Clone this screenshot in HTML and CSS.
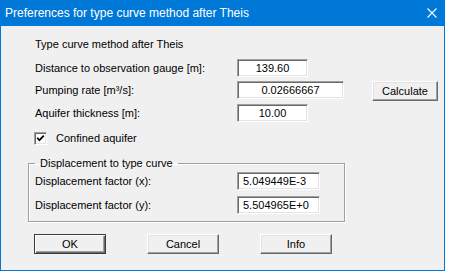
FILE: index.html
```html
<!DOCTYPE html>
<html lang="en">
<head>
    <meta charset="UTF-8">
    <title>Preferences for type curve method after Theis</title>
    <link rel="stylesheet" href="styles.css">
</head>
<body>
    <div class="window">
        <div class="titlebar">
            <span class="title">Preferences for type curve method after Theis</span>
            <svg class="close-icon" width="10" height="10" viewBox="0 0 10 10">
                <path d="M0.5 0.5 L9.5 9.5 M9.5 0.5 L0.5 9.5" stroke="#fff" stroke-width="1.1" fill="none"/>
            </svg>
        </div>

        <div class="content">
            <p class="heading">Type curve method after Theis</p>

            <div class="form-grid">
                <label class="field-label">Distance to observation gauge [m]:</label>
                <input class="field center short" type="text" value="139.60" readonly>
                <span></span>

                <label class="field-label">Pumping rate [m³/s]:</label>
                <input class="field center wide" type="text" value="0.02666667" readonly>
                <button class="btn calc-btn">Calculate</button>

                <label class="field-label">Aquifer thickness [m]:</label>
                <input class="field center short" type="text" value="10.00" readonly>
                <span></span>
            </div>

            <div class="check-row">
                <span class="checkbox">
                    <svg width="9" height="9" viewBox="0 0 9 9">
                        <path d="M1.2 3.8 L3.4 6.2 L7.8 1.6" stroke="#000" stroke-width="1.7" fill="none"/>
                    </svg>
                </span>
                <span>Confined aquifer</span>
            </div>

            <fieldset class="group">
                <legend>Displacement to type curve</legend>
                <div class="group-grid">
                    <label class="field-label">Displacement factor (x):</label>
                    <input class="field mid" type="text" value="5.049449E-3" readonly>

                    <label class="field-label">Displacement factor (y):</label>
                    <input class="field mid" type="text" value="5.504965E+0" readonly>
                </div>
            </fieldset>

            <div class="actions">
                <button class="btn default-btn">OK</button>
                <button class="btn">Cancel</button>
                <button class="btn">Info</button>
            </div>
        </div>
    </div>
</body>
</html>
```

FILE: styles.css
```css
body {
    margin: 0;
    padding: 0;
    background: #fff;
    font-family: "Liberation Sans", Arial, sans-serif;
    font-size: 11px;
    color: #000;
}

.window {
    width: 445px;
    height: 271px;
    box-sizing: border-box;
    border: 1px solid #0078d7;
    border-top: none;
    display: flex;
    flex-direction: column;
}

.titlebar {
    height: 26px;
    background: #0078d7;
    color: #fff;
    display: flex;
    align-items: center;
    justify-content: space-between;
    padding: 0 7px 0 4px;
    flex-shrink: 0;
}

.title {
    font-family: "Liberation Sans", Arial, sans-serif;
    font-size: 12px;
}

.close-icon {
    display: block;
}

.content {
    flex-grow: 1;
    background: #f0f0f0;
    padding: 12px 0 0 34px;
}

.heading {
    margin: 0;
    line-height: 13px;
}

/* label / input / button rows */
.form-grid {
    display: grid;
    grid-template-columns: 202px 135px 66px;
    grid-template-rows: 22px 23px 19px;
    align-items: start;
    margin-top: 8px;
}

.field-label {
    line-height: 18px;
    white-space: nowrap;
}

.field {
    height: 18px;
    box-sizing: border-box;
    padding: 0 3px;
    margin: 0;
    border: 1px solid;
    border-color: #a0a0a0 #fff #fff #a0a0a0;
    box-shadow: inset 1px 1px #696969, inset -1px -1px #e3e3e3;
    background: #fff;
    font-family: inherit;
    font-size: 11px;
    color: #000;
    outline: none;
}

.field.center {
    text-align: center;
}

.short {
    width: 71px;
}

.wide {
    width: 107px;
}

.mid {
    width: 83px;
    padding-left: 5px;
}

.btn {
    height: 20px;
    width: 72px;
    box-sizing: border-box;
    margin: 0;
    padding: 0;
    border: 1px solid;
    border-color: #fff #696969 #696969 #fff;
    box-shadow: inset -1px -1px #a0a0a0, inset 1px 1px #e3e3e3;
    background: #f0f0f0;
    font-family: inherit;
    font-size: 11px;
    color: #000;
}

.calc-btn {
    width: 66px;
}

.default-btn {
    border-color: #3c3c3c;
    box-shadow: inset 1px 1px #fff, inset -1px -1px #696969, inset -2px -2px #a0a0a0;
}

.check-row {
    display: flex;
    align-items: center;
    gap: 9px;
    height: 13px;
    line-height: 13px;
    margin: 9px 0 0 -1px;
}

.checkbox {
    width: 13px;
    height: 13px;
    box-sizing: border-box;
    border: 1px solid;
    border-color: #a0a0a0 #fff #fff #a0a0a0;
    box-shadow: inset 1px 1px #696969, inset -1px -1px #e3e3e3;
    background: #fff;
    display: flex;
    align-items: center;
    justify-content: center;
}

.checkbox svg {
    display: block;
}

.group {
    width: 317px;
    box-sizing: border-box;
    margin: 12px 0 0 -7px;
    padding: 2px 6px 7px 6px;
    border: 1px solid #a0a0a0;
    box-shadow: 1px 1px #fff, inset 1px 1px #fff;
    min-width: 0;
}

.group legend {
    padding: 0 5px;
    line-height: 13px;
}

.group-grid {
    display: grid;
    grid-template-columns: 202px 83px;
    grid-template-rows: 24px 18px;
    align-items: start;
}

.actions {
    display: flex;
    gap: 41px;
    margin: 12px 0 0 -1px;
}
```
